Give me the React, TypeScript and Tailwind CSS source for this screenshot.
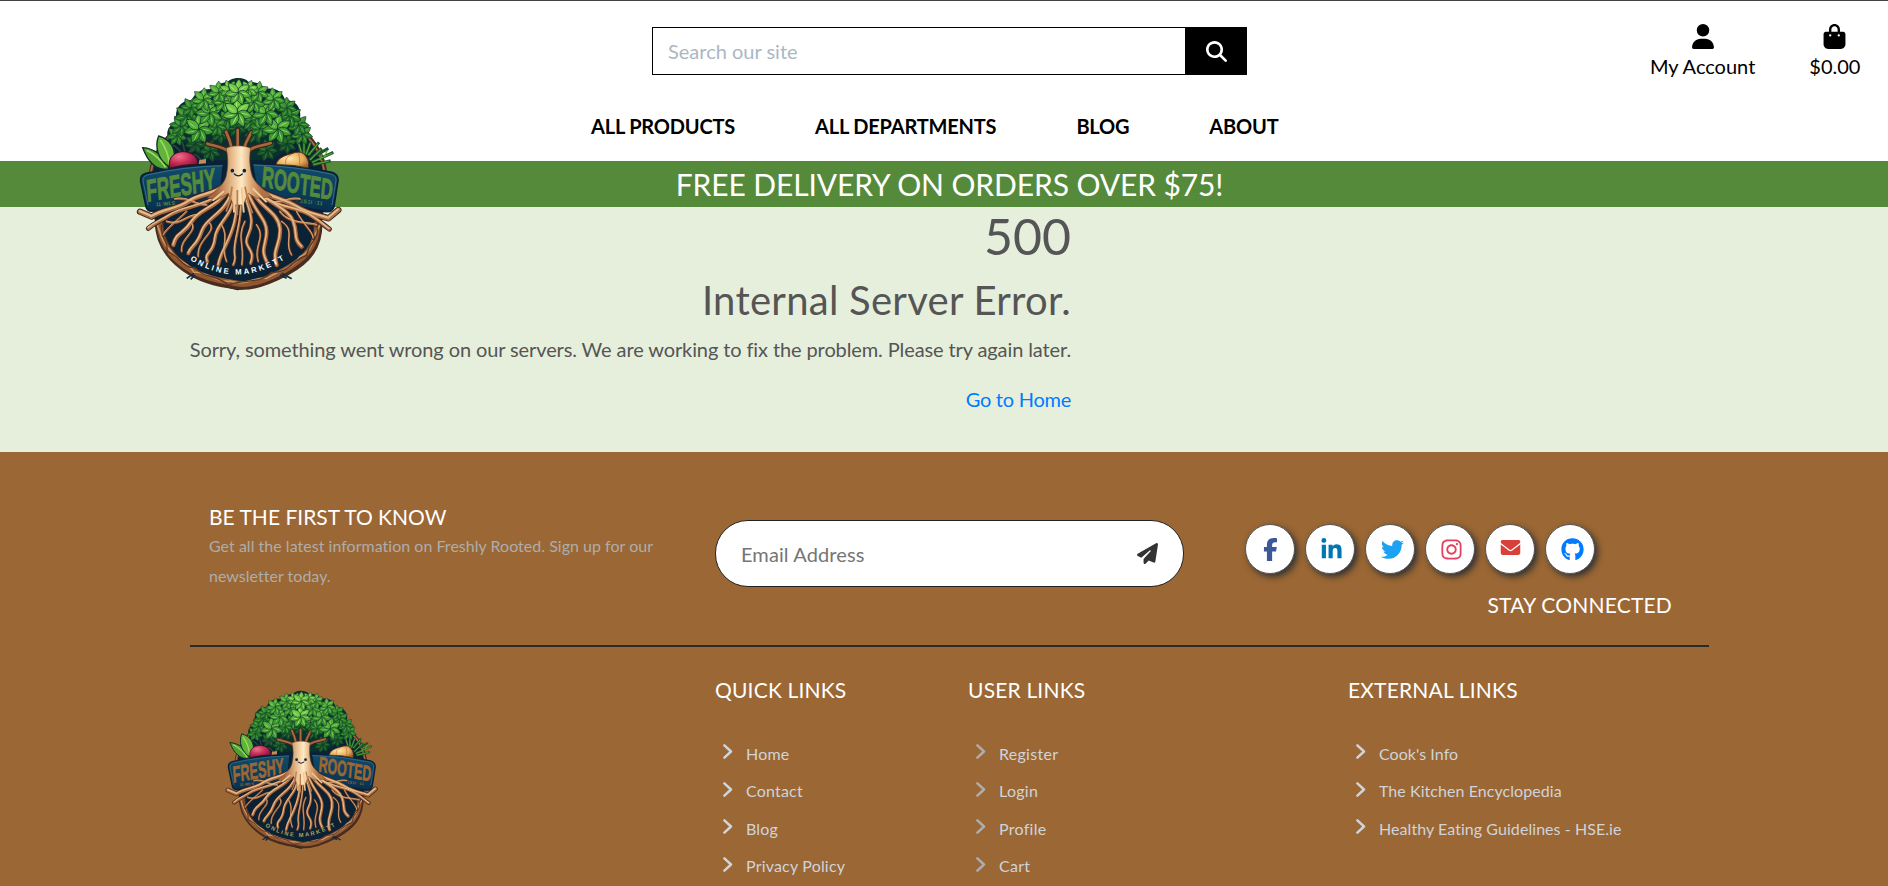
import React from "react";
import {
  FaUser,
  FaBagShopping,
  FaMagnifyingGlass,
  FaPaperPlane,
  FaFacebookF,
  FaLinkedinIn,
  FaTwitter,
  FaInstagram,
  FaEnvelope,
  FaGithub,
} from "react-icons/fa6";

const LEAF = "M0 0C-14 -8 -15 -24 0 -40C15 -24 14 -8 0 0Z";

type Cluster = [x: number, y: number, scale: number, turn: number, tone: number];

const TONES = [
  ["#17502a", "#23682b", "#3b8a34"],
  ["#2a7a2c", "#3c9232", "#62b545"],
  ["#3f9733", "#57b03c", "#8ad75c"],
  ["#52aa39", "#74c84a", "#a8ea72"],
];

const CLUSTERS: Cluster[] = [
  [270, 258, 0.85, 10, 0], [440, 256, 0.85, -10, 0], [225, 236, 0.8, 0, 0], [500, 236, 0.8, 20, 0],
  [300, 205, 0.85, 20, 0], [405, 205, 0.85, 0, 0], [350, 188, 0.8, 10, 0],
  [170, 212, 0.8, 5, 1], [545, 208, 0.85, 0, 1],
  [182, 182, 0.85, 20, 1], [535, 180, 0.85, -10, 1], [200, 152, 0.95, 0, 1], [508, 152, 0.95, 10, 1],
  [212, 128, 0.8, 20, 1], [500, 128, 0.8, 0, 1], [320, 165, 0.8, 20, 1], [392, 168, 0.8, 10, 1],
  [290, 185, 0.8, 0, 1], [420, 190, 0.8, 30, 1],
  [236, 192, 1.15, 0, 2], [472, 192, 1.15, 8, 2], [268, 144, 1.05, 14, 2], [437, 144, 1.05, 0, 2],
  [250, 104, 0.9, 5, 2], [460, 104, 0.9, -5, 2], [310, 110, 0.9, 12, 2], [400, 112, 0.9, 0, 2],
  [296, 82, 0.85, 0, 2], [414, 82, 0.85, 10, 2],
  [352, 144, 1.15, 0, 3], [328, 74, 0.75, -20, 3], [385, 74, 0.75, 20, 3], [354, 82, 1, 5, 3],
];

function LeafCluster({ c }: { c: Cluster }) {
  const [x, y, s, turn, tone] = c;
  const [shade, mid, light] = TONES[tone];
  return (
    <g transform={`translate(${x} ${y}) scale(${s}) rotate(${turn})`}>
      {[0, 52, 103, 154, 206, 257, 308].map((a) => (
        <g key={a} transform={`rotate(${a})`}>
          <path d={LEAF} fill={a > 90 && a < 270 ? shade : mid} stroke="#0b3029" strokeWidth="1.8" />
          <path d="M-1 -6Q-7 -20 -1 -33Z" fill={light} />
        </g>
      ))}
    </g>
  );
}

const ROOTS: [string, number][] = [
  ["M320 355C290 390 240 385 205 410S130 432 95 455L60 440", 14],
  ["M300 390C250 425 190 425 150 450S110 470 85 490", 10],
  ["M395 355C430 395 490 400 530 425S600 450 625 460L655 435", 14],
  ["M410 385C470 430 530 425 570 450S610 480 628 492", 10],
  ["M325 375C290 430 240 430 215 470S170 500 160 540", 12],
  ["M335 380C315 450 260 455 245 500S215 540 205 565", 11],
  ["M345 380C340 460 290 470 285 520S252 560 262 590", 10],
  ["M353 370C352 460 340 490 325 525S300 570 295 600", 10],
  ["M360 380C370 450 350 500 345 540S352 575 340 600", 7],
  ["M370 380C390 440 405 470 385 510S410 550 392 595", 9],
  ["M380 370C400 440 440 460 440 500S420 550 440 590", 11],
  ["M390 370C420 430 475 440 480 490S455 550 470 600", 12],
  ["M400 365C450 420 505 430 520 470S518 520 545 545", 12],
  ["M260 420C220 420 210 395 165 402", 6],
  ["M450 410C490 420 500 395 540 402", 6],
  ["M235 450C195 450 185 485 140 470", 6],
  ["M480 440C510 480 560 470 590 480", 6],
  ["M265 470C300 500 230 520 235 575", 5],
  ["M305 480C330 520 300 540 320 590", 5],
  ["M410 480C440 520 400 540 415 590", 5],
  ["M485 470C530 500 490 530 515 570", 5],
  ["M215 475C235 500 180 520 185 560", 5],
  ["M375 470C350 520 375 540 366 600", 5],
  ["M200 440C170 470 140 490 130 510", 5],
  ["M530 440C550 480 580 500 580 520", 5],
];

function TreeLogo({ size, cutout, market }: { size: number; cutout: string; market: string }) {
  const id = `logo${Math.round(size)}`;
  return (
    <svg width={size} height={size} viewBox="0 0 720 720" fill="none" className="block shrink-0">
      <defs>
        <linearGradient id={`${id}-bark`} x1="290" x2="425" y1="0" y2="0" gradientUnits="userSpaceOnUse">
          <stop offset="0" stopColor="#a8683f" />
          <stop offset="0.32" stopColor="#e4b686" />
          <stop offset="0.55" stopColor="#ffeac4" />
          <stop offset="0.75" stopColor="#e0ac79" />
          <stop offset="1" stopColor="#b07245" />
        </linearGradient>
        <linearGradient id={`${id}-sign`} x1="0" x2="0" y1="295" y2="440" gradientUnits="userSpaceOnUse">
          <stop offset="0" stopColor="#124c6b" />
          <stop offset="1" stopColor="#08304f" />
        </linearGradient>
        <radialGradient id={`${id}-beet`} cx="0.35" cy="0.3" r="0.8">
          <stop offset="0" stopColor="#f0708c" />
          <stop offset="0.5" stopColor="#c52b52" />
          <stop offset="1" stopColor="#6e1238" />
        </radialGradient>
        <radialGradient id={`${id}-onion`} cx="0.4" cy="0.4" r="0.7">
          <stop offset="0" stopColor="#ffe7ae" />
          <stop offset="0.6" stopColor="#e8b05c" />
          <stop offset="1" stopColor="#a5602c" />
        </radialGradient>
        <path id={`${id}-arc`} d="M210 585Q355 675 502 578" />
      </defs>

      {/* wreath ring */}
      <path
        d="M150 205C95 260 80 330 105 470C104 520 150 590 205 628C260 655 310 665 353 676C400 668 450 650 505 630C560 590 606 540 606 470C630 330 610 250 560 205Z"
        fill="#0a2236"
      />
      <path d="M152 210C112 250 92 300 92 340M560 210C595 245 612 280 616 330" stroke="#4a2c1e" strokeWidth="13" />
      <path d="M152 212C114 250 96 290 92 330M560 212C592 245 608 280 614 325" stroke="#a06b42" strokeWidth="6" />
      <path d="M118 470C118 545 165 590 215 620S320 655 353 660S440 650 500 618S596 545 594 470" stroke="#4a2b1d" strokeWidth="27" />
      <path d="M118 470C120 545 168 590 218 618S320 650 353 656S440 646 496 614S594 545 592 470" stroke="#8f5833" strokeWidth="17" />
      <path
        d="M112 480C125 515 128 535 150 555C170 590 205 590 222 622C260 618 290 655 330 648C380 665 400 635 440 640C480 615 520 610 540 575C585 555 575 515 600 480"
        stroke="#cf9561"
        strokeWidth="5"
      />
      <path
        d="M125 478C118 520 150 530 140 560C180 570 185 610 225 608C250 640 290 628 325 660C380 640 420 658 455 622C510 625 520 580 560 572C565 530 605 520 588 478"
        stroke="#5d3622"
        strokeWidth="4"
      />
      <path d="M222 625L200 640M225 630L212 643M485 625L515 641M480 630L500 640" stroke="#0f2a3e" strokeWidth="5" />

      {/* sign boards */}
      <g fill={`url(#${id}-sign)`} stroke="#0a2036" strokeWidth="5">
        <path d="M310 297Q190 300 78 325Q60 330 62 348L78 425Q82 440 100 438L300 405Z" />
        <path d="M397 295Q520 298 635 322Q655 328 654 346L642 425Q636 442 618 440L415 405Z" />
      </g>
      <path d="M308 302Q190 305 82 330Q68 334 69 348L84 420M400 300Q520 303 632 327Q649 332 648 346L636 420" stroke="#3c7892" strokeWidth="2.5" />
      <g fill={cutout} fontFamily="'Liberation Sans', sans-serif" fontWeight="bold">
        <text
          transform="translate(82 410) rotate(-10) skewX(-6) scale(.55 1)"
          fontSize="92"
          textLength="380"
          lengthAdjust="spacingAndGlyphs"
          stroke={cutout}
          strokeWidth="3"
        >
          FRESHY
        </text>
        <text
          transform="translate(424 364) rotate(11) skewX(6) scale(.55 1)"
          fontSize="86"
          textLength="392"
          lengthAdjust="spacingAndGlyphs"
          stroke={cutout}
          strokeWidth="3"
        >
          ROOTED
        </text>
        <text transform="translate(108 424) rotate(-5)" fontSize="16" textLength="58">
          11 ·W1 S
        </text>
        <text transform="translate(528 411) rotate(7)" fontSize="16" textLength="80">
          · 1S1I ·11
        </text>
      </g>

      {/* canopy base */}
      <path
        d="M150 225C130 205 150 175 170 170C160 130 185 105 215 105C225 80 250 70 278 72C295 50 320 55 330 45C350 35 375 38 385 50C410 50 430 60 435 72C470 65 490 85 495 105C530 105 545 130 540 160C570 175 575 210 555 225L515 240L480 272L430 285H280L225 265L200 235Z"
        fill="#0a2f2f"
      />
      {CLUSTERS.slice(0, 7).map((c, i) => (
        <LeafCluster key={i} c={c} />
      ))}

      {/* vegetables */}
      <g stroke="#0d2f2b" strokeWidth="4">
        <path d="M68 248C100 250 142 275 146 312C110 318 84 290 68 248Z" fill="#4f9f35" />
        <path d="M116 213C150 222 168 250 162 280L150 306C116 290 102 245 116 213Z" fill="#62b33c" />
      </g>
      <path d="M80 256C105 268 122 285 137 307M121 225C138 248 146 275 149 300" stroke="#9edb5d" strokeWidth="5" />
      <path d="M185 265C175 250 170 245 158 240M195 262C192 250 190 240 186 230M205 265C215 250 222 245 235 245M210 272C225 265 235 270 245 290" stroke="#2b4a30" strokeWidth="5" />
      <path d="M148 305C145 275 165 260 190 260S236 278 233 298Q190 298 148 310Z" fill={`url(#${id}-beet)`} stroke="#3c1028" strokeWidth="3" />
      <path d="M238 285L258 282V295L236 297Z" fill="#c98a58" />
      <g stroke="#1d5526" strokeWidth="9">
        <path d="M545 268L535 232M552 268L552 225M558 270L572 230M565 272L597 232M568 285L605 250M575 292L640 262M578 300L632 287M590 270L625 250" />
      </g>
      <g stroke="#58a63a" strokeWidth="3.5">
        <path d="M545 265L536 235M552 265L552 228M558 268L571 234M565 270L594 236M570 285L602 254M577 292L637 264M580 299L627 288M600 285L606 268M612 278L622 256" />
      </g>
      <path d="M468 299C472 278 498 270 515 266C530 260 545 260 552 267C566 282 568 296 564 309Q520 298 468 299Z" fill={`url(#${id}-onion)`} stroke="#53321d" strokeWidth="3" />
      <path d="M515 268C500 275 495 285 497 298M535 265C540 280 540 290 538 301" stroke="#bd7a36" strokeWidth="2.5" />

      {/* roots, branches and trunk */}
      <g strokeLinecap="round" strokeLinejoin="round">
        {ROOTS.map(([d, w]) => (
          <path key={d} d={d} stroke="#35201c" strokeWidth={w + 5} />
        ))}
        {ROOTS.map(([d, w]) => (
          <path key={d} d={d} stroke="#a96d45" strokeWidth={w} />
        ))}
        {ROOTS.map(([d, w]) => (
          <path key={d} d={d} stroke="#e6bb8a" strokeWidth={w * 0.42} transform="translate(-1 -2)" />
        ))}
        <path d="M330 262C310 245 290 245 262 236M380 262C400 240 425 245 452 234M335 250C330 225 325 215 318 200M372 250C380 225 388 215 394 202M353 255V195" stroke="#3d231b" strokeWidth="15" />
        <path d="M330 262C310 245 290 245 262 236M380 262C400 240 425 245 452 234M335 250C330 225 325 215 318 200M372 250C380 225 388 215 394 202M353 255V195" stroke="#a5693f" strokeWidth="8" />
      </g>
      <path
        d="M318 250C335 240 375 240 392 250C386 280 390 320 400 340C415 365 435 375 455 395L410 400L385 385L370 420H340L325 385L290 405L262 398C290 375 310 360 318 335C325 305 325 275 318 250Z"
        fill={`url(#${id}-bark)`}
        stroke="#6c412b"
        strokeWidth="2"
      />
      <path d="M336 365L330 410L318 440M352 375L352 450M375 365L385 410L398 445" stroke="#b87c4e" strokeWidth="5" />
      <path d="M345 375L342 440M365 370L371 440M310 380L280 405M400 372L438 410" stroke="#f0cb98" strokeWidth="6" strokeLinecap="round" />
      <circle cx="337" cy="317" r="5.5" fill="#102439" />
      <circle cx="373" cy="317" r="5.5" fill="#102439" />
      <path d="M343 327Q355 338 367 327" stroke="#102439" strokeWidth="4" strokeLinecap="round" />

      {CLUSTERS.slice(7).map((c, i) => (
        <LeafCluster key={i} c={c} />
      ))}

      <text fill={market} fontFamily="'Liberation Sans', sans-serif" fontWeight="bold" fontSize="23" textLength="300">
        <textPath href={`#${id}-arc`} textLength="300">
          ONLINE MARKETT
        </textPath>
      </text>
    </svg>
  );
}

const NAV = ["ALL PRODUCTS", "ALL DEPARTMENTS", "BLOG", "ABOUT"];

const SOCIAL = [
  { Icon: FaFacebookF, tone: "text-[#3b5998]" },
  { Icon: FaLinkedinIn, tone: "text-[#0077b5] translate-x-[1px]" },
  { Icon: FaTwitter, tone: "text-[#1da1f2] translate-x-[2px]" },
  { Icon: FaInstagram, tone: "text-[#e4405f] translate-x-[1px]" },
  { Icon: FaEnvelope, tone: "text-[#d8403a] -translate-y-[2px] scale-[.87]" },
  { Icon: FaGithub, tone: "text-[#007bff] translate-x-[2px]" },
];

type LinkColumnProps = { title: string; links: string[]; width: string; chevron: string; tracking: string };

function LinkColumn({ title, links, width, chevron, tracking }: LinkColumnProps) {
  return (
    <div className={width}>
      <h4 className="text-[21px] leading-[30px] tracking-[0.18px] text-white">{title}</h4>
      <ul className="mt-[30px]">
        {links.map((l) => (
          <li
            key={l}
            className={`flex h-[37.5px] items-center whitespace-nowrap pl-[8px] text-base text-[#ced4da] ${tracking}`}
          >
            <svg viewBox="0 0 10 15" className={`mr-[13px] h-[15px] w-[10px] shrink-0 -translate-y-[2px] ${chevron}`}>
              <path
                d="M1.4 1.4L8 7.5L1.4 13.6"
                fill="none"
                stroke="currentColor"
                strokeWidth="2.5"
                strokeLinecap="round"
                strokeLinejoin="round"
              />
            </svg>
            {l}
          </li>
        ))}
      </ul>
    </div>
  );
}

export default function App() {
  return (
    <div className="h-[886px] w-full overflow-hidden bg-[#e6efdc] font-['Lato',sans-serif]">
      <div className="w-[1899px]">
        <header className="relative flex h-[161px] border-t border-[#444] bg-white text-black">
          <div className="w-[591px]" />
          <div className="flex w-[1009px] flex-col">
            <div className="ml-[61px] mt-[26px] flex h-12 w-[595px]">
              <div className="flex w-[533px] items-center border border-r-0 border-black pl-[15px] text-xl text-[#aab7c4]">
                Search our site
              </div>
              <div className="flex w-[62px] items-center justify-center bg-black text-xl text-white">
                <FaMagnifyingGlass className="h-[21px] w-[21px]" />
              </div>
            </div>
            <nav className="mt-[36px] flex gap-20 whitespace-nowrap text-xl leading-[30px] font-bold tracking-[-0.19px]">
              {NAV.map((n) => (
                <a key={n}>{n}</a>
              ))}
            </nav>
          </div>
          <div className="mt-[23px] flex gap-[54px] pl-[50px] text-xl">
            <div className="flex flex-col items-center">
              <FaUser className="h-[25px] w-[25px] translate-x-[0.5px]" />
              <span className="mt-[2px] leading-[30px] whitespace-nowrap">My Account</span>
            </div>
            <div className="flex flex-col items-center">
              <FaBagShopping className="h-[25px] w-[25px]" />
              <span className="mt-[2px] leading-[30px]">$0.00</span>
            </div>
          </div>
          <div className="absolute left-[120px] top-[64px] z-10">
            <TreeLogo size={240} cutout="#568a3b" market="#ffffff" />
          </div>
        </header>

        <div className="flex h-[46px] items-center justify-center bg-[#568a3b] text-[30px] tracking-[-0.1px] text-white">
          FREE DELIVERY ON ORDERS OVER $75!
        </div>

        <main className="flex h-[245px] w-[1071px] flex-col text-right text-[#555]">
          <h1 className="h-[60px] text-[50px] leading-[58px]">500</h1>
          <h2 className="mt-2 h-[50px] text-[40px] leading-[50px] tracking-[0.27px]">Internal Server Error.</h2>
          <p className="mt-[9px] text-xl leading-[30px] tracking-[-0.106px] whitespace-nowrap">
            Sorry, something went wrong on our servers. We are working to fix the problem. Please try again later.
          </p>
          <a className="mt-5 text-xl leading-[30px] tracking-[-0.25px] text-[#007bff]">Go to Home</a>
        </main>

        <footer className="h-[434px] bg-[#9b6734] pl-[190px]">
          <div className="flex h-[195px] w-[1519px] border-b-2 border-[#292b2c]">
            <div className="w-[525px] pl-[19px] pt-[50px]">
              <h4 className="text-[21px] leading-[30px] text-white">BE THE FIRST TO KNOW</h4>
              <p className="-mt-px w-[470px] text-base leading-[30px] tracking-[0.02px] text-[#adadad]">
                Get all the latest information on Freshly Rooted. Sign up for our newsletter today.
              </p>
            </div>
            <div className="mt-[68px] flex h-[67px] w-[469px] items-center justify-between rounded-[33px] border border-[#222] bg-white pr-[25px] pl-[25px] text-xl text-[#757575]">
              <span className="tracking-[0.1px]">Email Address</span>
              <FaPaperPlane className="h-[21px] w-[21px] text-[#333]" />
            </div>
            <div className="ml-[61px] w-[427px] pt-[72px]">
              <div className="flex gap-[10px]">
                {SOCIAL.map(({ Icon, tone }, i) => (
                  <span
                    key={i}
                    className="flex h-[50px] w-[50px] items-center justify-center rounded-full border border-[#555] bg-white shadow-[3px_3px_6px_#333]"
                  >
                    <Icon className={`h-[23px] w-[23px] ${tone}`} />
                  </span>
                ))}
              </div>
              <h4 className="mt-[16px] text-right text-[21px] leading-[30px] tracking-[0.2px] text-white">STAY CONNECTED</h4>
            </div>
          </div>

          <div className="flex pt-[28px]">
            <div className="w-[525px] pt-[6px] pl-[23px]">
              <TreeLogo size={178.6} cutout="#9b6734" market="#b5a15c" />
            </div>
            <LinkColumn
              title="QUICK LINKS"
              width="w-[253px]"
              chevron="text-[#ced4da]"
              tracking="tracking-[0.19px]"
              links={["Home", "Contact", "Blog", "Privacy Policy"]}
            />
            <LinkColumn
              title="USER LINKS"
              width="w-[380px]"
              chevron="text-[#adadad]"
              tracking="tracking-[0.28px]"
              links={["Register", "Login", "Profile", "Cart"]}
            />
            <LinkColumn
              title="EXTERNAL LINKS"
              width="w-[400px]"
              chevron="text-[#ced4da]"
              tracking="tracking-[0.06px]"
              links={["Cook's Info", "The Kitchen Encyclopedia", "Healthy Eating Guidelines - HSE.ie"]}
            />
          </div>
        </footer>
      </div>
    </div>
  );
}
